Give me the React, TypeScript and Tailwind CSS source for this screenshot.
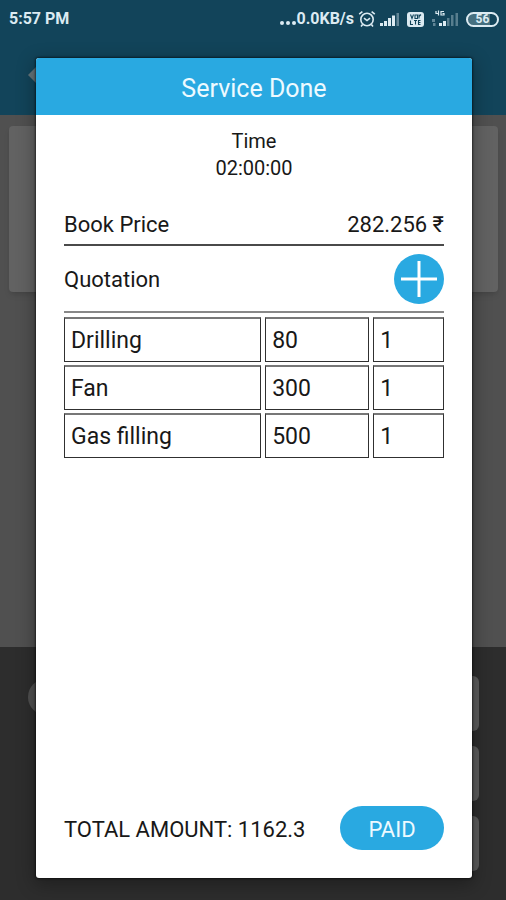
import React from "react";

type QuoteItem = { name: string; price: number; quantity: number };

const items: QuoteItem[] = [
  { name: "Drilling", price: 80, quantity: 1 },
  { name: "Fan", price: 300, quantity: 1 },
  { name: "Gas filling", price: 500, quantity: 1 },
];

function AlarmIcon() {
  return (
    <svg className="h-[18px] w-[18px]" viewBox="0 0 18 18" fill="none" stroke="currentColor" strokeWidth="1.6" aria-hidden="true">
      <circle cx="9" cy="9.5" r="6.2" />
      <path d="M1.2 4.2 4.4 1.6M16.8 4.2 13.6 1.6M4.6 14.4 3 16.4M13.4 14.4 15 16.4M6 8.2l3 2.4 3-2.4" />
    </svg>
  );
}

function SignalIcon() {
  return (
    <svg className="h-[15px] w-5" viewBox="0 0 20 15" fill="currentColor" aria-hidden="true">
      <rect x="0" y="11" width="3" height="3" />
      <rect x="4" y="9" width="3" height="5" />
      <rect x="8" y="6" width="3" height="8" />
      <rect x="12" y="3.500" width="3" height="10.500" />
      <rect x="16.500" y="1" width="2.500" height="13" opacity="0.4" />
    </svg>
  );
}

function VolteIcon() {
  return (
    <svg className="h-[15px] w-[17px]" viewBox="0 0 17 15" aria-hidden="true">
      <rect width="17" height="15" rx="3" fill="currentColor" />
      <g fill="none" stroke="#12445a" strokeWidth="1.1">
        <path d="M3.500 2.500 5 6.500 6.500 2.500M8 3h2.500v3.500H8zM12 2.500v4M14 2.500l-2 2M3.500 8.500v4H6M7 8.500h3M8.500 8.500v4M13.500 8.500H11.500v4h2M11.500 10.500h2" />
      </g>
    </svg>
  );
}

function WeakSignalIcon() {
  return (
    <svg className="h-[18px] w-7" viewBox="0 0 28 18" fill="currentColor" aria-hidden="true">
      <path d="M5 1v2.500h3M7.500 .5v5M13 1.500h-3v3.500h3v-1.500h-1.500" fill="none" stroke="currentColor" strokeWidth="1.2" />
      <rect x="1" y="9" width="3" height="3" opacity="0.4" />
      <rect x="2" y="13" width="2.500" height="3" opacity="0.4" />
      <rect x="8" y="13" width="3" height="3" />
      <rect x="12" y="11" width="3" height="5" />
      <rect x="16" y="8" width="2.500" height="8" opacity="0.35" />
      <rect x="20" y="5" width="2.500" height="11" opacity="0.35" />
      <rect x="24.500" y="3" width="2.500" height="13" opacity="0.35" />
    </svg>
  );
}

function StatusBar() {
  return (
    <div className="flex h-9 items-center justify-between pt-[2px] pr-[7px] pl-[9px] text-[16px] font-bold text-[#dcebf2]">
      <time>5:57 PM</time>
      <div className="flex items-center">
        <span className="flex gap-[2px] pt-[7px]" aria-hidden="true">
          <i className="size-1 rounded-full bg-current" />
          <i className="size-1 rounded-full bg-current" />
          <i className="size-1 rounded-full bg-current" />
        </span>
        <span className="mr-1">0.0KB/s</span>
        <AlarmIcon />
        <span className="ml-1 flex items-center gap-[7px]">
          <SignalIcon />
          <VolteIcon />
          <WeakSignalIcon />
          <span className="flex h-[15px] w-[33px] items-center justify-center rounded-full border-2 border-current bg-[linear-gradient(90deg,#467080_75%,transparent_75%)] text-[12px] leading-none">
            56
          </span>
        </span>
      </div>
    </div>
  );
}

function DimmedPage() {
  return (
    <div className="flex min-h-screen flex-col bg-[#505050]">
      <header className="flex h-[115px] flex-col bg-[#12445a]">
        <StatusBar />
        <svg className="mt-[30px] ml-7 h-[18px] w-3" viewBox="0 0 12 18" fill="#65747a" aria-hidden="true">
          <path d="M0 9 9 0v18z" />
        </svg>
      </header>
      <main className="flex-1 pt-[11px] pr-2 pl-[9px]">
        <div className="h-[166px] rounded-sm bg-[#626262] shadow-md" />
      </main>
      <footer className="flex h-[253px] justify-between bg-[#2d2d2d] pt-[29px] pr-[27px] pl-7">
        <div className="mt-[3px] size-9 rounded-full bg-[#505050]" />
        <div className="flex flex-col gap-[15px]">
          <div className="h-[55px] w-12 rounded-md bg-[#5c5c5c]" />
          <div className="h-[55px] w-12 rounded-md bg-[#5c5c5c]" />
          <div className="h-[55px] w-12 rounded-md bg-[#5c5c5c]" />
        </div>
      </footer>
    </div>
  );
}

function ServiceDialog() {
  return (
    <section
      role="dialog"
      aria-labelledby="dialog-title"
      className="flex w-full flex-col overflow-hidden rounded-[3px] bg-white text-[22px] text-[#181818] shadow-[0_5px_18px_2px_rgba(0,0,0,0.3),0_0_2px_1px_rgba(0,0,0,0.5)]"
    >
      <h1 id="dialog-title" className="flex h-[57px] items-center justify-center bg-[#29a9e1] pt-1 text-[25px] text-[#edfaff]">
        Service Done
      </h1>
      <div className="flex flex-1 flex-col px-7 pt-[13px] pb-7">
        <div className="text-center text-[20px] leading-[27px]">
          <p>Time</p>
          <p>02:00:00</p>
        </div>
        <div className="mt-[19px] flex h-[45px] items-center justify-between border-b-2 border-[#4a4a4a] pt-1">
          <span>Book Price</span>
          <span>282.256 ₹</span>
        </div>
        <div className="flex h-[67px] items-center justify-between border-b-2 border-[#888888]">
          <span className="pt-[2px]">Quotation</span>
          <button type="button" aria-label="Add quotation item" className="flex size-[50px] items-center justify-center rounded-full bg-[#29a9e1] text-white">
            <svg className="size-9" viewBox="0 0 36 36" stroke="currentColor" strokeWidth="3" aria-hidden="true">
              <path d="M18 0v36M0 18h36" />
            </svg>
          </button>
        </div>
        <div className="-mx-1 mt-px">
          <table className="w-full table-fixed border-separate border-spacing-x-1 border-spacing-y-[3px] text-left text-[23px]">
            <colgroup>
              <col className="w-[53%]" />
              <col className="w-[28%]" />
              <col className="w-[19%]" />
            </colgroup>
            <tbody>
              {items.map((item) => (
                <tr key={item.name} className="h-[45px]">
                  <td className="border border-t-2 border-[#303030] border-t-[#777777] px-[6px] pt-[3px] pb-0">{item.name}</td>
                  <td className="border border-t-2 border-[#303030] border-t-[#777777] px-[6px] pt-[3px] pb-0">{item.price}</td>
                  <td className="border border-t-2 border-[#303030] border-t-[#777777] px-[6px] pt-[3px] pb-0">{item.quantity}</td>
                </tr>
              ))}
            </tbody>
          </table>
        </div>
        <div className="mt-auto flex items-center justify-between">
          <p className="pt-[2px]">TOTAL AMOUNT: 1162.3</p>
          <button type="button" className="h-11 w-[104px] rounded-full bg-[#29a9e1] pt-[2px] text-[#edfaff]">
            PAID
          </button>
        </div>
      </div>
    </section>
  );
}

export default function App() {
  return (
    <div className="relative font-[Roboto,'Noto_Sans',sans-serif]">
      <DimmedPage />
      <div className="absolute inset-0 flex pt-[58px] pr-[34px] pb-[22px] pl-9">
        <ServiceDialog />
      </div>
    </div>
  );
}
